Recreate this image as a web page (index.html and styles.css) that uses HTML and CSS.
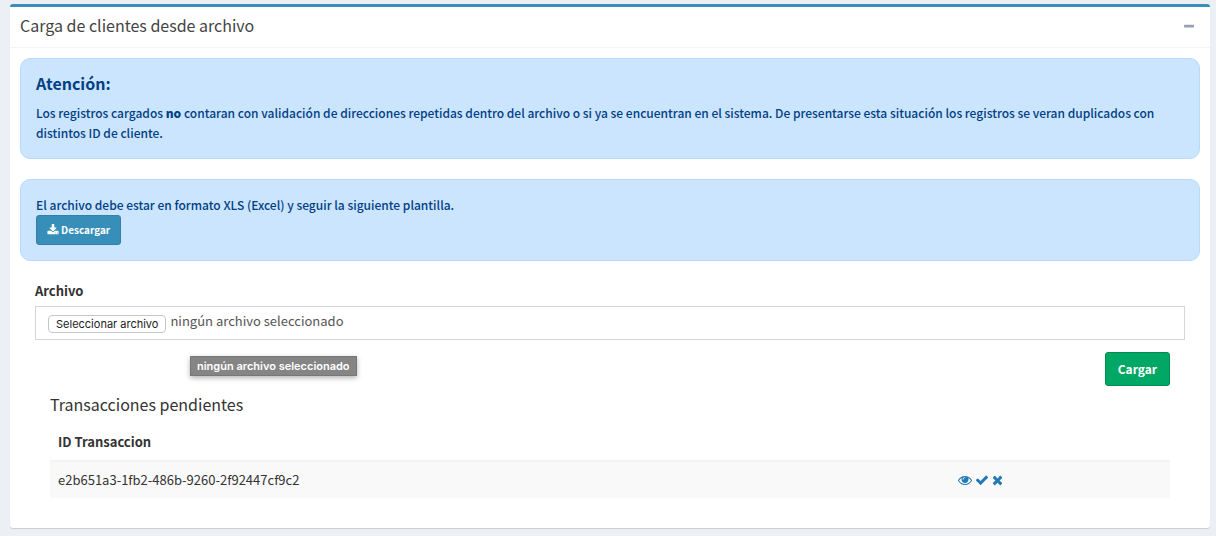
FILE: index.html
```html
<!DOCTYPE html>
<html lang="es">
<head>
<meta charset="utf-8">
<title>Carga de clientes</title>
<meta name="viewport" content="width=device-width, initial-scale=1">
<link rel="stylesheet" href="styles.css">
</head>
<body>
<main class="box">
  <header class="box-header">
    <h1 class="title">Carga de clientes desde archivo</h1>
    <button class="collapse" type="button" aria-label="Contraer">
      <svg class="icon-minus" viewBox="192 0 1408 1792" aria-hidden="true"><path d="M1600 736v192q0 40-28 68t-68 28h-1216q-40 0-68-28t-28-68v-192q0-40 28-68t68-28h1216q40 0 68 28t28 68z"/></svg>
    </button>
  </header>
  <div class="box-body">
    <section class="alert">
      <h2 class="alert-title">Atención:</h2>
      <p class="alert-text">Los registros cargados <strong>no</strong> contaran con validación de direcciones repetidas dentro del archivo o si ya se encuentran en el sistema. De presentarse esta situación los registros se veran duplicados con distintos ID de cliente.</p>
    </section>
    <section class="alert">
      <p class="alert-text">El archivo debe estar en formato XLS (Excel) y seguir la siguiente plantilla.</p>
      <button class="btn btn-download" type="button">
        <svg class="icon-download" viewBox="0 0 1792 1792" aria-hidden="true"><path d="M1344 1344q0-26-19-45t-45-19-45 19-19 45 19 45 45 19 45-19 19-45zm256 0q0-26-19-45t-45-19-45 19-19 45 19 45 45 19 45-19 19-45zm128-224v320q0 40-28 68t-68 28h-1472q-40 0-68-28t-28-68v-320q0-40 28-68t68-28h465l135 136q58 56 136 56t136-56l136-136h464q40 0 68 28t28 68zm-325-569q17 41-14 70l-448 448q-18 19-45 19t-45-19l-448-448q-31-29-14-70 17-39 59-39h256v-448q0-26 19-45t45-19h256q26 0 45 19t19 45v448h256q42 0 59 39z"/></svg>
        Descargar
      </button>
    </section>
    <form class="upload">
      <label class="field-label" for="archivo">Archivo</label>
      <div class="file-field">
        <input class="file-input" id="archivo" type="file">
        <label class="file-button" for="archivo">Seleccionar archivo</label>
        <span class="file-status">ningún archivo seleccionado</span>
        <span class="tooltip" role="tooltip">ningún archivo seleccionado</span>
      </div>
      <div class="actions">
        <button class="btn btn-submit" type="submit">Cargar</button>
      </div>
    </form>
    <section class="pending">
      <h2 class="title">Transacciones pendientes</h2>
      <table class="table">
        <thead>
          <tr><th class="col-id" scope="col">ID Transaccion</th><th></th></tr>
        </thead>
        <tbody>
          <tr>
            <td>e2b651a3-1fb2-486b-9260-2f92447cf9c2</td>
            <td>
              <div class="row-actions">
                <a href="#ver" aria-label="Ver"><svg class="icon" viewBox="0 0 1792 1792" aria-hidden="true"><path d="M1664 960q-152-236-381-353 61 104 61 225 0 185-131.5 316.5t-316.5 131.5-316.5-131.5-131.5-316.5q0-121 61-225-229 117-381 353 133 205 333.5 326.5t434.5 121.5 434.5-121.5 333.5-326.5zm-720-384q0-20-14-34t-34-14q-125 0-214.5 89.5t-89.5 214.5q0 20 14 34t34 14 34-14 14-34q0-86 61-147t147-61q20 0 34-14t14-34zm848 384q0 34-20 69-140 230-376.5 368.5t-499.5 138.5-499.5-139-376.5-368q-20-35-20-69t20-69q140-229 376.5-368t499.5-139 499.5 139 376.5 368q20 35 20 69z"/></svg></a>
                <a href="#aceptar" aria-label="Aceptar"><svg class="icon" viewBox="0 0 1792 1792" aria-hidden="true"><path d="M1671 566q0 40-28 68l-724 724-136 136q-28 28-68 28t-68-28l-136-136-362-362q-28-28-28-68t28-68l136-136q28-28 68-28t68 28l294 295 656-657q28-28 68-28t68 28l136 136q28 28 28 68z"/></svg></a>
                <a href="#cancelar" aria-label="Cancelar"><svg class="icon icon-narrow" viewBox="192 0 1408 1792" aria-hidden="true"><path d="M1490 1322q0 40-28 68l-136 136q-28 28-68 28t-68-28l-294-294-294 294q-28 28-68 28t-68-28l-136-136q-28-28-28-68t28-68l294-294-294-294q-28-28-28-68t28-68l136-136q28-28 68-28t68 28l294 294 294-294q28-28 68-28t68 28l136 136q28 28 28 68t-28 68l-294 294 294 294q28 28 28 68z"/></svg></a>
              </div>
            </td>
          </tr>
        </tbody>
      </table>
    </section>
  </div>
</main>
</body>
</html>
```
FILE: styles.css
```css
* { box-sizing: border-box; }

body {
  margin: 0;
  padding: 4px 6px 8px 10px;
  background: #ecf0f5;
  color: #333;
  font-family: "Noto Sans CJK SC", "Noto Sans", sans-serif;
  font-size: 13px;
  line-height: 20px;
}

h1, h2, p { margin: 0; }
svg { display: block; fill: currentColor; }

.box {
  background: #fff;
  border-top: 3px solid #378fb9;
  border-radius: 3px;
  box-shadow: 0 1px 1px rgba(0, 0, 0, 0.15);
}

.box-header {
  display: flex;
  align-items: flex-start;
  justify-content: space-between;
  padding: 8px 10px 12px;
  border-bottom: 1px solid #f4f4f4;
  color: #444;
}

.title { font-size: 16px; font-weight: 400; line-height: 20px; }

.collapse {
  padding: 5px 6px 0;
  border: 0;
  background: transparent;
  color: #97a0b3;
}

.icon-minus { width: 10px; height: 13px; }

.box-body { padding: 10px 10px 30px; }

.alert {
  margin-bottom: 20px;
  padding: 15px;
  border: 1px solid #b8daff;
  border-radius: 10px;
  background: #cce5ff;
  color: #004085;
}

.alert-title {
  margin-bottom: 11px;
  font-size: 16px;
  font-weight: 700;
  line-height: 18px;
}

.alert-text { font-size: 12px; font-weight: 500; }
.alert-text strong { font-weight: 900; }

.btn {
  display: inline-flex;
  align-items: center;
  border: 1px solid;
  border-radius: 3px;
  color: #fff;
  font-family: inherit;
}

.btn-download {
  gap: 2px;
  padding: 5px 10px;
  border-color: #367fa9;
  background: #378fb9;
  font-size: 10px;
  font-weight: 700;
  line-height: 18px;
}

.icon-download { width: 12px; height: 12px; }

.upload { padding: 0 15px; }

.field-label {
  display: block;
  margin-bottom: 5px;
  font-weight: 700;
}

.file-field {
  position: relative;
  display: flex;
  align-items: center;
  gap: 4px;
  height: 34px;
  padding: 0 12px;
  border: 1px solid #d2d6de;
  color: #555;
}

.file-input {
  position: absolute;
  inset: 0;
  width: 100%;
  height: 100%;
  opacity: 0;
}

.file-button {
  margin-top: 2px;
  padding: 0 7px;
  border: 1px solid #c6c6c6;
  border-radius: 4px;
  background: #fff;
  color: #222;
  font-family: Inter, sans-serif;
  font-size: 11px;
  line-height: 16px;
}

.file-status { padding-bottom: 4px; }

.tooltip {
  position: absolute;
  top: 49px;
  left: 154px;
  padding: 0 6px;
  border: 1px solid #777;
  background: #858585;
  box-shadow: 0 2px 5px rgba(0, 0, 0, 0.3);
  color: #fff;
  font-family: Inter, sans-serif;
  font-size: 11px;
  font-weight: 600;
  line-height: 18px;
}

.actions {
  display: flex;
  justify-content: flex-end;
  padding: 12px 15px 0;
}

.btn-submit {
  padding: 6px 12px;
  border-color: #008d4c;
  background: #00a765;
  font-size: 12px;
  font-weight: 700;
  line-height: 20px;
}

.pending { padding: 8px 30px 0; }

.table {
  width: 100%;
  margin-top: 10px;
  border-collapse: collapse;
}

.table th, .table td { padding: 8px; text-align: left; }
.table th { border-bottom: 2px solid #f4f4f4; }
.table td { background: #f9f9f9; }
.col-id { width: 900px; }

.row-actions { display: flex; gap: 3px; }
.row-actions a { color: #2279b5; }
.icon { width: 14px; height: 14px; }
.icon-narrow { width: 11px; }
```
